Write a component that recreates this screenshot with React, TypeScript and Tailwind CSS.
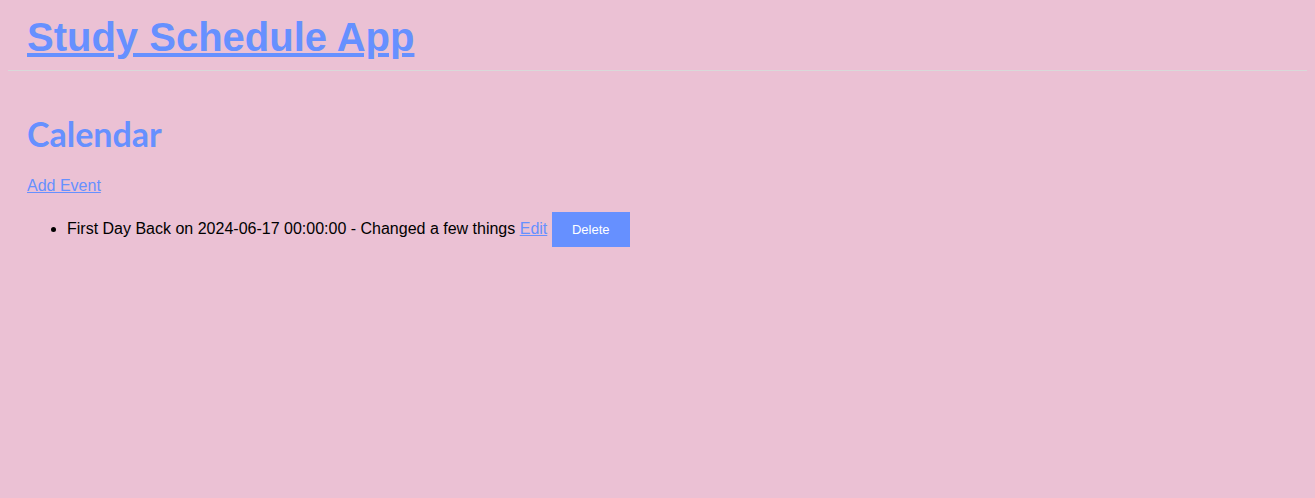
export default function App() {
  return (
    <div className="min-h-screen bg-[#ebc1d4] p-2 font-['Liberation_Sans',Arial,sans-serif] text-black">
      <header className="px-[19px] pt-[6px] pb-[10px]">
        <a href="#" className="text-[40px] font-bold leading-[46px] text-[#6690ff] underline">
          Study Schedule App
        </a>
      </header>
      <hr className="border-t border-[#d9d9d9]" />
      <main className="px-[19px] pt-[44px]">
        <h2 className="font-['Lato',sans-serif] text-[34px] font-bold leading-[38px] text-[#6690ff]">
          Calendar
        </h2>
        <a href="#" className="mt-[21px] inline-block text-base text-[#6690ff] underline">
          Add Event
        </a>
        <ul className="mt-[14px] list-disc pl-10">
          <li className="text-base">
            First Day Back on 2024-06-17 00:00:00 - Changed a few things{" "}
            <a href="#" className="text-[#6690ff] underline">
              Edit
            </a>{" "}
            <button className="h-[35px] w-[78px] bg-[#6690ff] text-[13px] font-normal text-white">
              Delete
            </button>
          </li>
        </ul>
      </main>
    </div>
  );
}
